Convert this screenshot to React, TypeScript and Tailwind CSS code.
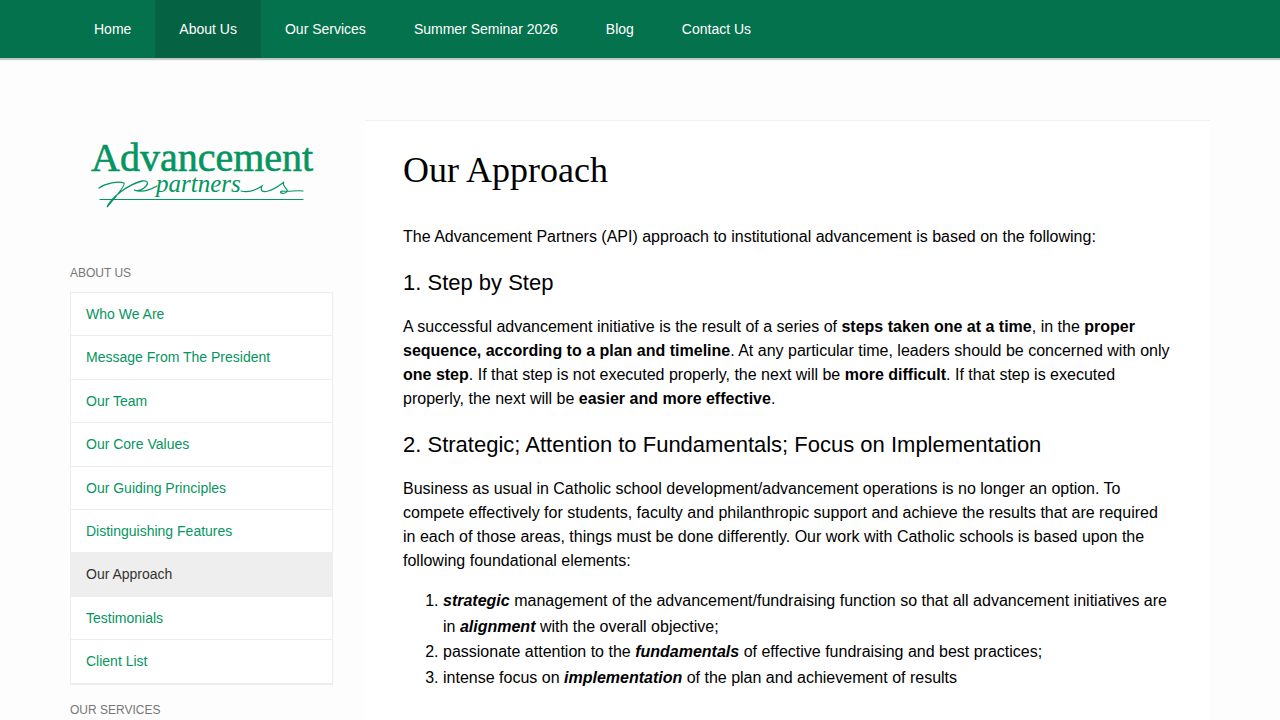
import { FC } from "react";
import clsx from "clsx";

interface NavItem {
  label: string;
  active?: boolean;
}

const mainNav: NavItem[] = [
  { label: "Home" },
  { label: "About Us", active: true },
  { label: "Our Services" },
  { label: "Summer Seminar 2026" },
  { label: "Blog" },
  { label: "Contact Us" },
];

const aboutLinks: NavItem[] = [
  { label: "Who We Are" },
  { label: "Message From The President" },
  { label: "Our Team" },
  { label: "Our Core Values" },
  { label: "Our Guiding Principles" },
  { label: "Distinguishing Features" },
  { label: "Our Approach", active: true },
  { label: "Testimonials" },
  { label: "Client List" },
];

const Navbar: FC = () => {
  return (
    <header className="bg-[#04724d] border-b border-[#b5c9c0] shadow-[0_1px_1px_rgba(0,0,0,0.2)]">
      <nav className="max-w-[1140px] mx-auto flex">
        {mainNav.map((item) => (
          <a
            key={item.label}
            href="#"
            className={clsx(
              "px-6 py-[19px] text-sm text-white",
              item.active && "bg-[#056343]"
            )}
          >
            {item.label}
          </a>
        ))}
      </nav>
    </header>
  );
};

const Logo: FC = () => {
  return (
    <a href="#" className="block">
      <svg viewBox="0 0 263 80" className="w-full" fill="#059560">
        <text
          x="21"
          y="36"
          fontSize="40"
          fontFamily="'Liberation Serif', serif"
          stroke="#059560"
          strokeWidth="0.6"
        >
          Advancement
        </text>
        <text
          x="86"
          y="57"
          fontSize="25"
          fontStyle="italic"
          fontFamily="'Liberation Serif', serif"
        >
          partners
        </text>
        <g fill="none" stroke="#059560" strokeLinecap="round">
          {/* flourishes on both sides of the script line */}
          <path d="M29 53 C36 48 48 46 54 48 C56 50 44 64 37 72 C42 62 57 50 72 46 C80 45 78 50 74 53 C70 56 66 56 64 55 C72 58 80 55 87 51" strokeWidth="1.3" />
          <path d="M171 56 C180 58 186 55 192 51 C190 55 192 58 198 56 C204 55 210 50 214 47 C210 51 222 55 215 58 C211 59 209 57 212 56 C220 57 226 55 233 56" strokeWidth="1.2" />
          <path d="M30 64.5 H233" strokeWidth="1.2" />
        </g>
      </svg>
    </a>
  );
};

const Sidebar: FC = () => {
  return (
    <aside className="w-[263px] shrink-0 pt-[15px]">
      <Logo />
      <h2 className="mt-12 text-xs leading-5 text-[#777777] uppercase">
        About Us
      </h2>
      <ul className="mt-[9px] bg-white border border-b-2 border-[#ededed]">
        {aboutLinks.map((item) => (
          <li
            key={item.label}
            className="border-b border-[#ededed] last:border-b-0"
          >
            <a
              href="#"
              className={clsx(
                "block px-[15px] py-2.5 text-sm leading-[1.6]",
                item.active ? "bg-[#eeeeee] text-[#333333]" : "text-[#059560]"
              )}
            >
              {item.label}
            </a>
          </li>
        ))}
      </ul>
      <h2 className="mt-[15px] text-xs leading-5 text-[#777777] uppercase">
        Our Services
      </h2>
    </aside>
  );
};

const Article: FC = () => {
  return (
    <main className="flex-1 min-w-0 bg-white border-t border-[#f0f0f0] px-[38px] pt-6 pb-10 text-base leading-6 text-black">
      <h1 className="font-['Liberation_Serif',serif] text-4xl leading-[50px]">
        Our Approach
      </h1>
      <p className="mt-[30px]">
        The Advancement Partners (API) approach to institutional advancement is
        based on the following:
      </p>
      <h3 className="mt-[21px] mb-[19px] text-[22px] leading-[26px]">
        1. Step by Step
      </h3>
      <p>
        A successful advancement initiative is the result of a series of{" "}
        <strong>steps taken one at a time</strong>, in the{" "}
        <strong>proper sequence, according to a plan and timeline</strong>. At
        any particular time, leaders should be concerned with only{" "}
        <strong>one step</strong>. If that step is not executed properly, the
        next will be <strong>more difficult</strong>. If that step is executed
        properly, the next will be <strong>easier and more effective</strong>.
      </p>
      <h3 className="mt-[21px] mb-[19px] text-[22px] leading-[26px]">
        2. Strategic; Attention to Fundamentals; Focus on Implementation
      </h3>
      <p>
        Business as usual in Catholic school development/advancement operations
        is no longer an option. To compete effectively for students, faculty and
        philanthropic support and achieve the results that are required in each
        of those areas, things must be done differently. Our work with Catholic
        schools is based upon the following foundational elements:
      </p>
      <ol className="mt-[15px] pl-10 list-decimal leading-[1.6]">
        <li>
          <strong>
            <em>strategic</em>
          </strong>{" "}
          management of the advancement/fundraising function so that all
          advancement initiatives are in{" "}
          <strong>
            <em>alignment</em>
          </strong>{" "}
          with the overall objective;
        </li>
        <li>
          passionate attention to the{" "}
          <strong>
            <em>fundamentals</em>
          </strong>{" "}
          of effective fundraising and best practices;
        </li>
        <li>
          intense focus on{" "}
          <strong>
            <em>implementation</em>
          </strong>{" "}
          of the plan and achievement of results
        </li>
      </ol>
    </main>
  );
};

const App: FC = () => {
  return (
    <div className="min-h-screen bg-[#fdfdfd] font-['Liberation_Sans',sans-serif]">
      <Navbar />
      <div className="max-w-[1140px] mx-auto mt-[61px] flex gap-8">
        <Sidebar />
        <Article />
      </div>
    </div>
  );
};

export default App;
